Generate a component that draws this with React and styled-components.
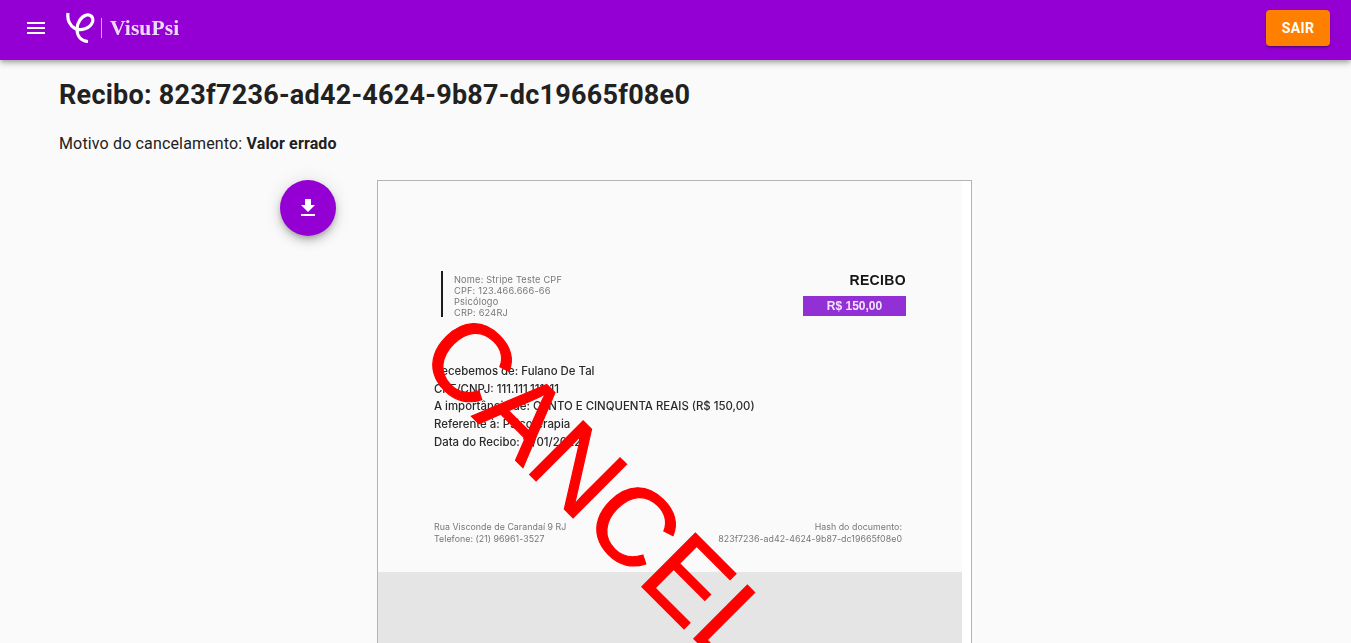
import React from "react";
import styled, { createGlobalStyle } from "styled-components";

const Global = createGlobalStyle`
  html, body { margin: 0; height: 643px; overflow: hidden; background: #fafafa; }
  body { font-family: Roboto, "Liberation Sans", sans-serif; color: #212121; }
`;
const Bar = styled.header`
  height: 60px; box-sizing: border-box; background: #9400d3; display: flex; align-items: center; padding: 0 21px 4px 16px;
  box-shadow: 0 2px 4px -1px rgba(0,0,0,.2), 0 4px 5px rgba(0,0,0,.14), 0 1px 10px rgba(0,0,0,.12);
  position: relative; z-index: 2;
`;
const Menu = styled.button`
  width: 40px; height: 40px; border: 0; padding: 0; background: none; display: flex; align-items: center; justify-content: center; color: #fff;
`;
const Brand = styled.div`
  display: flex; align-items: center; margin-left: 10px; color: #fff; flex: 1; height: 44px;
  filter: blur(.3px);
`;
const BrandDivider = styled.span`
  width: 1px; height: 20px; background: rgba(255,255,255,.65); margin: 0 8px 0 5px;
`;
const BrandName = styled.span`
  font-family: "Liberation Serif", serif; font-weight: 700; font-size: 21.500px; color: rgba(255,255,255,.85); letter-spacing: .1px;
`;
const Exit = styled.button`
  width: 64px; height: 36px; border: 0; border-radius: 4px; background: #ff7f00; color: #fff;
  font: 700 14px Roboto, sans-serif; letter-spacing: .4px; padding: 0;
  box-shadow: 0 3px 1px -2px rgba(0,0,0,.2), 0 2px 2px rgba(0,0,0,.14), 0 1px 5px rgba(0,0,0,.12);
`;
const Main = styled.main`
  padding: 0 59px;
`;
const Title = styled.h1`
  margin: 0; padding-top: 19px; font-size: 27px; line-height: 32px; font-weight: 700; color: #212121; letter-spacing: .25px;
`;
const Reason = styled.p`
  margin: 0; padding-top: 23px; font-size: 16px; line-height: 20px; letter-spacing: .15px;
  b { font-weight: 700; }
`;
const Row = styled.section`
  display: flex; gap: 41px; margin: 26px 0 0 221px; align-items: flex-start;
`;
const Fab = styled.button`
  width: 56px; height: 56px; border: 0; border-radius: 50%; background: #9400d3; color: #fff; padding: 0;
  display: flex; align-items: center; justify-content: center;
  box-shadow: 0 3px 5px -1px rgba(0,0,0,.2), 0 6px 10px rgba(0,0,0,.14), 0 1px 18px rgba(0,0,0,.12);
`;
const Frame = styled.div`
  width: 593px; height: 480px; border: 1px solid #b4b4b4; display: flex; position: relative; overflow: hidden; background: #fff; flex: none;
`;
const Viewer = styled.div`
  width: 584px; background: #e5e5e5; flex: none;
`;
const Page = styled.article`
  height: 391px; background: #fafafa; box-sizing: border-box; padding: 90px 56px 0; display: flex; flex-direction: column;
  font-family: Inter, "Open Sans", sans-serif; filter: blur(.35px);
`;
const Head = styled.div`
  display: flex; justify-content: space-between; align-items: flex-start;
`;
const Issuer = styled.div`
  margin-left: 7px; border-left: 2px solid #1c1c1c; padding-left: 11px; height: 46px; box-sizing: border-box; font-size: 9.2px; line-height: 11px; color: #777; padding-top: 3px; letter-spacing: .2px;
`;
const Amount = styled.div`
  display: flex; flex-direction: column; align-items: flex-end; gap: 7px;
`;
const DocTitle = styled.div`
  font: 700 14px "Liberation Sans", sans-serif; line-height: 18px; color: #151515; letter-spacing: .35px;
`;
const Price = styled.div`
  width: 103px; height: 20px; background: #9330d5; color: #f2e6fb; font: 700 12px/20px "Liberation Sans", sans-serif; text-align: center;
`;
const Body = styled.div`
  margin-top: 46px; font-size: 11.4px; line-height: 17.7px; color: #2a2a2a; font-weight: 500;
`;
const Foot = styled.footer`
  margin-top: auto; margin-bottom: 27px; padding-right: 4px; display: flex; justify-content: space-between; font-size: 8.8px; line-height: 12px; color: #777; letter-spacing: .05px;
`;
const FootRight = styled.div`
  text-align: right;
`;
const Stamp = styled.div`
  position: absolute; left: 64px; top: 97px; font: 400 110px/1 "Liberation Sans", sans-serif; color: #ff0000;
  -webkit-text-stroke: 1.2px #ff0000;
  transform: rotate(45deg); transform-origin: 0 50%; white-space: nowrap;
`;

export default function App() {
  return (
    <>
      <Global />
      <Bar>
        <Menu aria-label="menu">
          <svg width="24" height="24" viewBox="0 0 24 24" fill="currentColor"><path d="M3 18h18v-2H3v2zm0-5h18v-2H3v2zm0-7v2h18V6H3z" /></svg>
        </Menu>
        <Brand>
          <svg width="30" height="32" viewBox="0 0 30 32" fill="none" stroke="#fff" strokeWidth="3.2" strokeLinecap="butt">
            <path d="M2 1C1 8 4 14 9 16.500C15 19 24 17 26.500 10C28 5 24 2 20.500 3C15 4.500 11 11 11 17C11 24 15 29 22 29.500" />
          </svg>
          <BrandDivider />
          <BrandName>VisuPsi</BrandName>
        </Brand>
        <Exit>SAIR</Exit>
      </Bar>
      <Main>
        <Title>Recibo: 823f7236-ad42-4624-9b87-dc19665f08e0</Title>
        <Reason>Motivo do cancelamento: <b>Valor errado</b></Reason>
        <Row>
          <Fab aria-label="download">
            <svg width="24" height="24" viewBox="0 0 24 24" fill="currentColor"><path d="M19 9h-4V3H9v6H5l7 7 7-7zM5 18v2h14v-2H5z" /></svg>
          </Fab>
          <Frame>
            <Viewer>
              <Page>
                <Head>
                  <Issuer>Nome: Stripe Teste CPF<br />CPF: 123.466.666-66<br />Psicólogo<br />CRP: 624RJ</Issuer>
                  <Amount>
                    <DocTitle>RECIBO</DocTitle>
                    <Price>R$ 150,00</Price>
                  </Amount>
                </Head>
                <Body>
                  Recebemos de: Fulano De Tal<br />
                  CPF/CNPJ: 111.111.111-11<br />
                  A importância de: CENTO E CINQUENTA REAIS (R$ 150,00)<br />
                  Referente à: Psicoterapia<br />
                  Data do Recibo: 11/01/2022
                </Body>
                <Foot>
                  <div>Rua Visconde de Carandaí 9 RJ<br />Telefone: (21) 96961-3527</div>
                  <FootRight>Hash do documento:<br />823f7236-ad42-4624-9b87-dc19665f08e0</FootRight>
                </Foot>
              </Page>
            </Viewer>
            <Stamp>CANCEL</Stamp>
          </Frame>
        </Row>
      </Main>
    </>
  );
}
